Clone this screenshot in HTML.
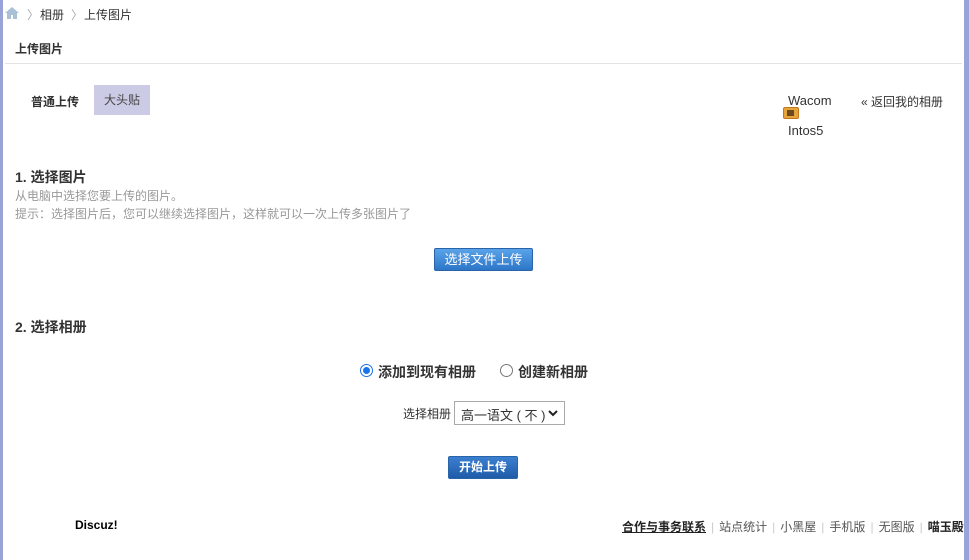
<!DOCTYPE html>
<html><head><meta charset="utf-8"><style>
*{margin:0;padding:0;box-sizing:border-box}
body{width:969px;height:560px;overflow:hidden;background:#fff;font-family:"Liberation Sans","Noto Sans CJK SC",sans-serif;font-size:12px;color:#333;position:relative}
.lb{position:absolute;left:0;top:0;width:3px;height:560px;background:#9aa3d8}
.rb{position:absolute;left:964px;top:0;width:5px;height:560px;background:#9aa3d8}
.a{position:absolute;white-space:nowrap}
.btn{position:absolute;border:1px solid #2a64a8;color:#fff;text-align:center;border-radius:2px}
.s{color:#ccc;margin:0 5px}
</style></head><body>
<div class="lb"></div><div class="rb"></div>
<svg class="a" style="left:5px;top:7px" width="14" height="12" viewBox="0 0 14 12"><path d="M7 0L0 6h2v6h4V8h2v4h4V6h2z" fill="#a9c0d6"/></svg>
<div class="a" style="left:27px;top:6px;color:#aaa">〉</div>
<div class="a" style="left:40px;top:6px;color:#333">相册</div>
<div class="a" style="left:71px;top:6px;color:#aaa">〉</div>
<div class="a" style="left:84px;top:6px;color:#333">上传图片</div>
<div class="a" style="left:15px;top:40px;font-weight:bold;color:#333">上传图片</div>
<div class="a" style="left:5px;top:63px;width:957px;height:1px;background:#e3e3e3"></div>
<div class="a" style="left:31px;top:93px;font-weight:bold;color:#333">普通上传</div>
<div class="a" style="left:94px;top:85px;width:56px;height:30px;background:#cccbe6;color:#444;text-align:center;line-height:30px">大头贴</div>
<div class="a" style="left:788px;top:93px;font-size:13px">Wacom</div>
<div class="a" style="left:783px;top:107px;width:16px;height:12px;background:#e8a33a;border:1px solid #c07820;border-radius:2px"><div style="margin:2px 0 0 3px;width:7px;height:6px;background:#6a4a20"></div></div>
<div class="a" style="left:788px;top:123px;font-size:13px">Intos5</div>
<div class="a" style="left:861px;top:93px">« 返回我的相册</div>
<div class="a" style="left:15px;top:167px;font-size:14px;font-weight:bold">1. 选择图片</div>
<div class="a" style="left:15px;top:187px;color:#999">从电脑中选择您要上传的图片。</div>
<div class="a" style="left:15px;top:205px;color:#999">提示：选择图片后，您可以继续选择图片，这样就可以一次上传多张图片了</div>
<div class="btn" style="left:434px;top:248px;width:99px;height:23px;line-height:21px;font-size:13px;background:linear-gradient(#5aa3ea,#2d76c8)">选择文件上传</div>
<div class="a" style="left:15px;top:317px;font-size:14px;font-weight:bold">2. 选择相册</div>
<div class="a" style="left:360px;top:364px;width:13px;height:13px;border-radius:50%;border:1px solid #1a73e8;background:#fff"><div style="margin:2px;width:7px;height:7px;border-radius:50%;background:#1a73e8"></div></div>
<div class="a" style="left:378px;top:362px;font-size:14px;font-weight:bold">添加到现有相册</div>
<div class="a" style="left:500px;top:364px;width:13px;height:13px;border-radius:50%;border:1px solid #777"></div>
<div class="a" style="left:518px;top:362px;font-size:14px;font-weight:bold">创建新相册</div>
<div class="a" style="left:403px;top:405px">选择相册</div>
<div class="a" style="left:454px;top:401px;width:111px;height:24px;border:1px solid #aaa;padding:3px 0 0 6px;font-size:13px">高一语文 ( 不 )<svg style="position:absolute;right:6px;top:8px" width="10" height="7" viewBox="0 0 10 7"><path d="M1 1l4 4 4-4" stroke="#222" stroke-width="2" fill="none"/></svg></div>
<div class="btn" style="left:448px;top:456px;width:70px;height:23px;line-height:21px;font-weight:bold;background:linear-gradient(#3c7fd0,#1f5ca8)">开始上传</div>
<div class="a" style="left:75px;top:518px;font-weight:bold;color:#000">Discuz!</div>
<div class="a" style="left:622px;top:518px;color:#555"><b style="color:#222;text-decoration:underline">合作与事务联系</b><span class="s">|</span>站点统计<span class="s">|</span>小黑屋<span class="s">|</span>手机版<span class="s">|</span>无图版<span class="s">|</span><b style="color:#222">喵玉殿</b></div>
</body></html>
